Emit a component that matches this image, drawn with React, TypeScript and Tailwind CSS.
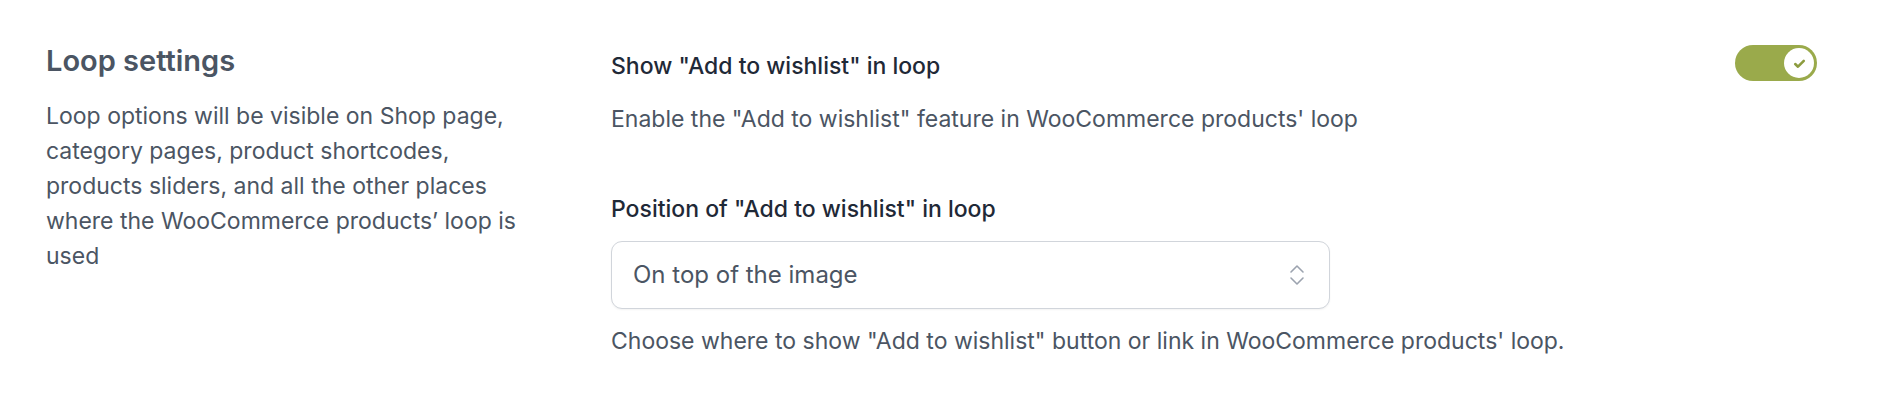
export default function App() {
  return (
    <div className="flex h-[406px] w-full bg-white pl-[46px] pr-[79px] pt-[43px] font-['Inter',sans-serif]">
      {/* Section intro */}
      <div className="w-[565px] shrink-0">
        <h2 className="text-[29px] font-semibold leading-[36px] text-[#4b5563]">Loop settings</h2>
        <p className="mt-[20px] w-[485px] text-[23px] leading-[35px] text-[#4b5563]">
          Loop options will be visible on Shop page, category pages, product shortcodes, products sliders, and all
          the other places where the WooCommerce products’ loop is used
        </p>
      </div>

      {/* Options */}
      <div className="flex-1 pt-[2px]">
        <div className="flex items-start justify-between">
          <div className="pt-[7px]">
            <div className="text-[23px] font-medium leading-[28px] text-[#1f2937]">
              Show "Add to wishlist" in loop
            </div>
            <div className="mt-[25px] text-[23px] leading-[28px] text-[#4b5563]">
              Enable the "Add to wishlist" feature in WooCommerce products' loop
            </div>
          </div>
          <Toggle />
        </div>

        <div className="mt-[62px] text-[23px] font-medium leading-[28px] text-[#1f2937]">
          Position of "Add to wishlist" in loop
        </div>
        <div className="mt-[18px] flex h-[68px] w-[719px] items-center justify-between rounded-[11px] border border-[#d1d5db] bg-white pl-[21px] pr-[24px] shadow-[0_1px_2px_rgba(0,0,0,0.05)]">
          <span className="text-[24px] text-[#4b5563]">On top of the image</span>
          <svg width="16" height="22" viewBox="0 0 16 22" fill="none" stroke="#9ca3af" strokeWidth="1.6" strokeLinecap="round" strokeLinejoin="round">
            <path d="M2 8l6-6 6 6" />
            <path d="M2 14l6 6 6-6" />
          </svg>
        </div>
        <div className="mt-[18px] text-[23px] leading-[28px] text-[#4b5563]">
          Choose where to show "Add to wishlist" button or link in WooCommerce products' loop.
        </div>
      </div>
    </div>
  )
}

function Toggle() {
  return (
    <div className="flex h-[36px] w-[82px] items-center justify-end rounded-full bg-[#9aaa4b] px-[3px]">
      <div className="flex h-[30px] w-[30px] items-center justify-center rounded-full bg-white">
        <svg width="15" height="15" viewBox="0 0 14 14" fill="none" stroke="#8d9c3f" strokeWidth="2.4" strokeLinecap="round" strokeLinejoin="round">
          <path d="M3 7.5l2.6 2.5L11 4.5" />
        </svg>
      </div>
    </div>
  )
}
